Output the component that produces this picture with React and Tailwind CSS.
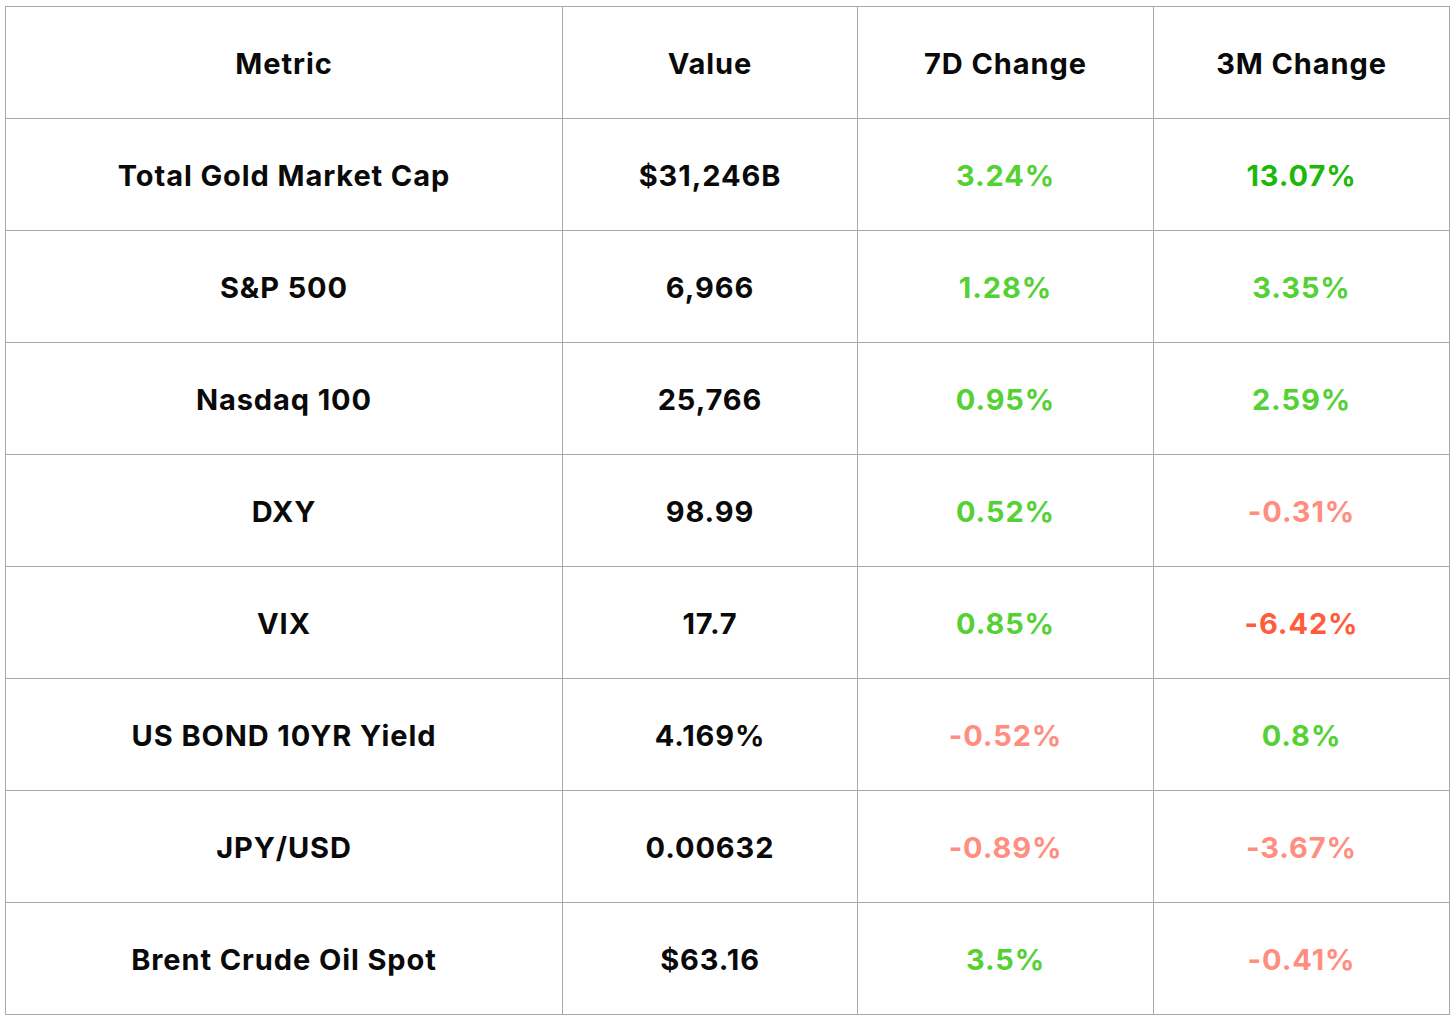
import React from "react";

const G1 = "text-[#55d136]";
const G2 = "text-[#1db80a]";
const R1 = "text-[#ff8e80]";
const R2 = "text-[#ff5b3d]";

const rows = [
  ["Total Gold Market Cap", "$31,246B", ["3.24%", G1], ["13.07%", G2]],
  ["S&P 500", "6,966", ["1.28%", G1], ["3.35%", G1]],
  ["Nasdaq 100", "25,766", ["0.95%", G1], ["2.59%", G1]],
  ["DXY", "98.99", ["0.52%", G1], ["-0.31%", R1]],
  ["VIX", "17.7", ["0.85%", G1], ["-6.42%", R2]],
  ["US BOND 10YR Yield", "4.169%", ["-0.52%", R1], ["0.8%", G1]],
  ["JPY/USD", "0.00632", ["-0.89%", R1], ["-3.67%", R1]],
  ["Brent Crude Oil Spot", "$63.16", ["3.5%", G1], ["-0.41%", R1]],
];

const cell = "border border-[#a9a9a9] h-[112px] text-center align-middle p-0 pt-[2px]";

export default function App() {
  return (
    <div className="bg-white w-[1456px] h-[1023px] pt-[6px] pl-[5px]" style={{ fontFamily: "Inter, 'Noto Sans', sans-serif" }}>
      <table className="border-collapse w-[1444px] table-fixed text-[29px] font-bold text-[#0a0a0a] tracking-[0.9px]">
        <colgroup>
          <col className="w-[557px]" />
          <col className="w-[295px]" />
          <col className="w-[296px]" />
          <col className="w-[296px]" />
        </colgroup>
        <thead>
          <tr>
            <th className={cell + " font-bold"}>Metric</th>
            <th className={cell + " font-bold"}>Value</th>
            <th className={cell + " font-bold"}>7D Change</th>
            <th className={cell + " font-bold"}>3M Change</th>
          </tr>
        </thead>
        <tbody>
          {rows.map((r) => (
            <tr key={r[0]}>
              <td className={cell}>{r[0]}</td>
              <td className={cell}>{r[1]}</td>
              <td className={cell + " " + r[2][1]}>{r[2][0]}</td>
              <td className={cell + " " + r[3][1]}>{r[3][0]}</td>
            </tr>
          ))}
        </tbody>
      </table>
    </div>
  );
}
